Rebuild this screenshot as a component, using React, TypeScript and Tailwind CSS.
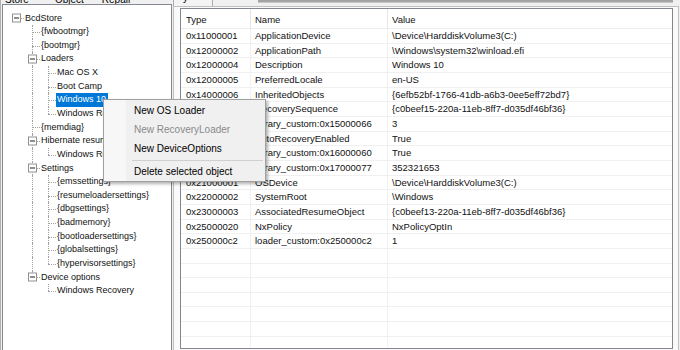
import React from "react";

type TreeItem = {
  label: string;
  level: number;
  rails?: boolean[];
  box?: boolean;
  last?: boolean;
  selected?: boolean;
};

const tree: TreeItem[] = [
  { label: "BcdStore", level: 0, box: true, last: true },
  { label: "{fwbootmgr}", level: 1 },
  { label: "{bootmgr}", level: 1 },
  { label: "Loaders", level: 1, box: true },
  { label: "Mac OS X", level: 2, rails: [true] },
  { label: "Boot Camp", level: 2, rails: [true] },
  { label: "Windows 10", level: 2, rails: [true], selected: true },
  { label: "Windows Recovery", level: 2, rails: [true], last: true },
  { label: "{memdiag}", level: 1 },
  { label: "Hibernate resume", level: 1, box: true },
  { label: "Windows Recovery", level: 2, rails: [true], last: true },
  { label: "Settings", level: 1, box: true },
  { label: "{emssettings}", level: 2, rails: [true] },
  { label: "{resumeloadersettings}", level: 2, rails: [true] },
  { label: "{dbgsettings}", level: 2, rails: [true] },
  { label: "{badmemory}", level: 2, rails: [true] },
  { label: "{bootloadersettings}", level: 2, rails: [true] },
  { label: "{globalsettings}", level: 2, rails: [true] },
  { label: "{hypervisorsettings}", level: 2, rails: [true], last: true },
  { label: "Device options", level: 1, box: true, last: true },
  { label: "Windows Recovery", level: 2, rails: [false], last: true },
];

const rows: [string, string, string][] = [
  ["0x11000001", "ApplicationDevice", "\\Device\\HarddiskVolume3(C:)"],
  ["0x12000002", "ApplicationPath", "\\Windows\\system32\\winload.efi"],
  ["0x12000004", "Description", "Windows 10"],
  ["0x12000005", "PreferredLocale", "en-US"],
  ["0x14000006", "InheritedObjects", "{6efb52bf-1766-41db-a6b3-0ee5eff72bd7}"],
  ["0x14000008", "RecoverySequence", "{c0beef15-220a-11eb-8ff7-d035df46bf36}"],
  ["0x15000066", "library_custom:0x15000066", "3"],
  ["0x16000009", "AutoRecoveryEnabled", "True"],
  ["0x16000060", "library_custom:0x16000060", "True"],
  ["0x17000077", "library_custom:0x17000077", "352321653"],
  ["0x21000001", "OSDevice", "\\Device\\HarddiskVolume3(C:)"],
  ["0x22000002", "SystemRoot", "\\Windows"],
  ["0x23000003", "AssociatedResumeObject", "{c0beef13-220a-11eb-8ff7-d035df46bf36}"],
  ["0x25000020", "NxPolicy", "NxPolicyOptIn"],
  ["0x250000c2", "loader_custom:0x250000c2", "1"],
  ["", "", ""],
  ["", "", ""],
  ["", "", ""],
  ["", "", ""],
  ["", "", ""],
  ["", "", ""],
  ["", "", ""],
];

const line = "border-[#a0a0a0] border-dotted";

function TreeRow({ item }: { item: TreeItem }) {
  const cells = [];
  for (let i = 0; i <= item.level; i++) {
    if (i < item.level) {
      const rail = i > 0 && item.rails?.[i - 1];
      cells.push(
        <div key={i} className="relative w-[16px] shrink-0">
          {rail && <span className={`absolute left-[8px] top-0 bottom-0 border-l ${line}`} />}
        </div>
      );
    } else {
      cells.push(
        <div key={i} className="relative w-[16px] shrink-0">
          {item.level > 0 && (
            <span
              className={`absolute left-[8px] top-0 border-l ${line} ${item.last ? "h-1/2" : "bottom-0"}`}
            />
          )}
          <span className={`absolute left-[8px] right-0 top-1/2 border-t ${line}`} />
          {item.box && (
            <span className="absolute left-[4px] top-1/2 -translate-y-1/2 w-[9px] h-[9px] border border-[#919191] bg-white flex items-center justify-center">
              <span className="w-[5px] h-px bg-[#1e1e1e]" />
            </span>
          )}
        </div>
      );
    }
  }
  return (
    <div className="flex h-[13.65px] leading-[13.65px]">
      {cells}
      <span
        className={`pl-[1px] pr-[2px] whitespace-nowrap ${
          item.selected ? "bg-[#0078d7] text-white" : "text-[#111]"
        }`}
      >
        {item.label}
      </span>
    </div>
  );
}

const ContextMenu = () => {
  return (
    <div className="absolute left-[102px] top-[99px] w-[163px] h-[83px] border border-[#a0a0a0] bg-[#f0f0f0] shadow-[2px_2px_3px_rgba(0,0,0,0.3)] flex text-[10px] text-black">
      <div className="w-[22px] bg-[#f7f7f7]" />
      <div className="flex-1 py-[1px]">
        <div className="h-[19px] leading-[19px] pl-[8px]">New OS Loader</div>
        <div className="h-[19px] leading-[19px] pl-[8px] text-[#8a8a8a]">New RecoveryLoader</div>
        <div className="h-[19px] leading-[19px] pl-[8px]">New DeviceOptions</div>
        <div className="h-[4px] flex items-center pl-[6px] pr-[2px]">
          <div className="h-px flex-1 bg-[#d0d0d0]" />
        </div>
        <div className="h-[19px] leading-[19px] pl-[8px]">Delete selected object</div>
      </div>
    </div>
  );
};

const App = () => {
  return (
    <div className="relative w-[680px] h-[350px] overflow-hidden bg-[#f0f0f0] border-l border-[#b0b0b0] flex font-['Liberation_Sans',Arial,sans-serif]">
      {/* left side: menu + tree */}
      <div className="w-[171px] flex flex-col shrink-0">
        <div className="h-[4px] overflow-hidden flex items-start text-[10px] leading-[12px] text-black">
          <span className="ml-[4px] -mt-[6px]">Store</span>
          <span className="ml-[26px] -mt-[6px]">Object</span>
          <span className="ml-[18px] -mt-[6px]">Repair</span>
        </div>
        <div className="ml-[1px] flex-1 border border-b-0 border-[#828790] bg-white pt-[6.5px] pl-[5px] text-[9px] overflow-hidden">
          {tree.map((item, i) => (
            <TreeRow key={i} item={item} />
          ))}
        </div>
      </div>

      {/* right side: tab control */}
      <div className="flex-1 flex flex-col">
        <div className="h-[6px] flex overflow-hidden">
          <div className="ml-[1px] w-[40px] border-x border-[#acacac] bg-[#f4f4f4] flex items-start text-[10px] leading-[12px]">
            <span className="ml-[9px] -mt-[8px]">y</span>
          </div>
          <div className="ml-[45px] w-[415px] h-[3px] bg-[#a3a3a3] border-b border-[#c8c8c8]" />
        </div>
        <div className="ml-[1px] mr-[1px] flex-1 border border-b-0 border-[#c0c0c0] bg-[#fafafa] pt-[1px] pl-[6px] pr-[5px]">
          <div className="h-[341px] border border-[#828790] bg-white overflow-hidden text-[9.5px] text-[#111]">
            <div className="grid grid-cols-[70px_137px_1fr] h-[20px] border-b border-[#ececec]">
              <div className="pl-[5px] leading-[21px] border-r border-[#e5e5e5]">Type</div>
              <div className="pl-[4px] leading-[21px] border-r border-[#e5e5e5]">Name</div>
              <div className="pl-[4px] leading-[21px]">Value</div>
            </div>
            {rows.map(([t, n, v], i) => (
              <div key={i} className="grid grid-cols-[70px_137px_1fr] h-[14.67px] leading-[14.5px] border-b border-[#f0f0f0]">
                <div className="pl-[5px] border-r border-[#f0f0f0] whitespace-nowrap">{t}</div>
                <div className="pl-[4px] border-r border-[#f0f0f0] whitespace-nowrap">{n}</div>
                <div className="pl-[4px] whitespace-nowrap">{v}</div>
              </div>
            ))}
          </div>
        </div>
      </div>

      <ContextMenu />
    </div>
  );
};

export default App;
